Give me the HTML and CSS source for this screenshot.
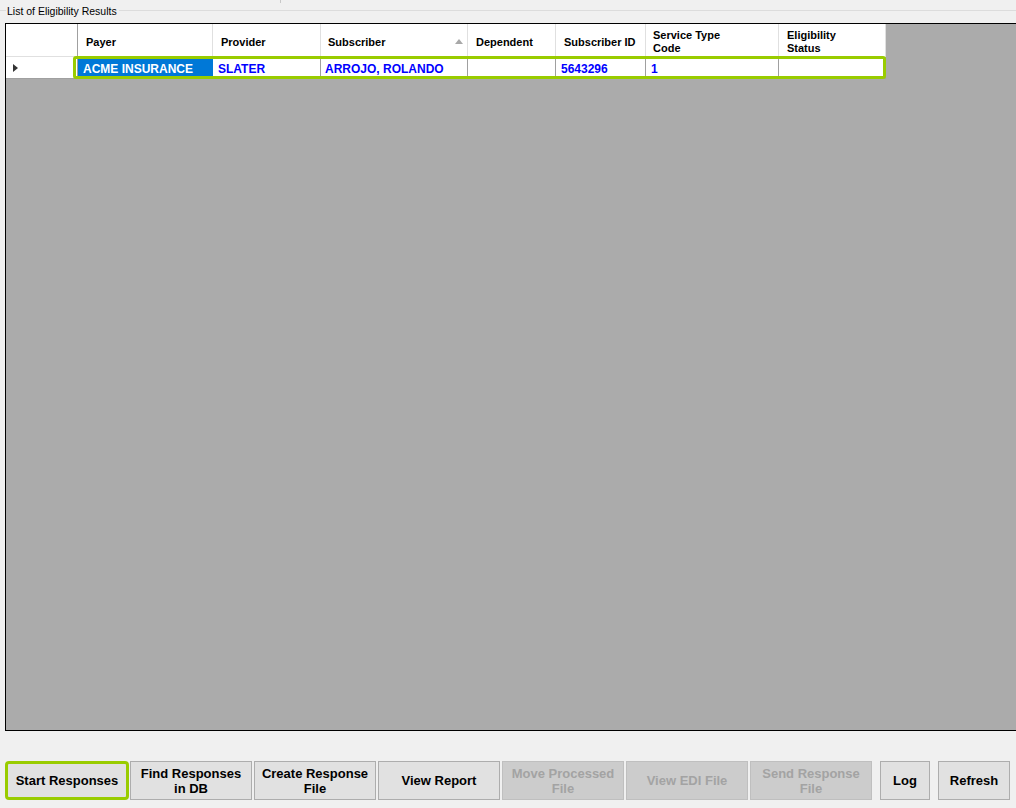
FILE: index.html
```html
<!DOCTYPE html>
<html>
<head>
<meta charset="utf-8">
<link rel="stylesheet" href="styles.css">
</head>
<body>
<div class="window">
  <div class="group-title">
    <span class="group-line short"></span>
    <span class="group-text">List of Eligibility Results</span>
    <span class="group-line long"></span>
    <span class="tick"></span>
  </div>
  <div class="grid">
    <div class="table">
      <div class="row head">
        <div class="cell rh"></div>
        <div class="cell c1">Payer</div>
        <div class="cell c2">Provider</div>
        <div class="cell c3">Subscriber<span class="sort"></span></div>
        <div class="cell c4">Dependent</div>
        <div class="cell c5">Subscriber ID</div>
        <div class="cell c6 two">Service Type<br>Code</div>
        <div class="cell c7 two">Eligibility<br>Status</div>
      </div>
      <div class="row data">
        <div class="cell rh"><span class="tri"></span></div>
        <div class="cell c1 sel">ACME INSURANCE</div>
        <div class="cell c2">SLATER</div>
        <div class="cell c3">ARROJO, ROLANDO</div>
        <div class="cell c4"></div>
        <div class="cell c5">5643296</div>
        <div class="cell c6">1</div>
        <div class="cell c7"></div>
        <div class="highlight"></div>
      </div>
    </div>
  </div>
  <div class="buttons">
    <button class="btn start">Start Responses</button>
    <button class="btn w122 g1">Find Responses<br>in DB</button>
    <button class="btn w122">Create Response<br>File</button>
    <button class="btn w122">View Report</button>
    <button class="btn w122 dis">Move Processed<br>File</button>
    <button class="btn w122 dis">View EDI File</button>
    <button class="btn w122 dis">Send Response<br>File</button>
    <button class="btn log">Log</button>
    <button class="btn refresh">Refresh</button>
  </div>
</div>
</body>
</html>
```
FILE: styles.css
```css
html, body {
  margin: 0;
  padding: 0;
  background: #f0f0f0;
  overflow: hidden;
}
.window {
  width: 1016px;
  height: 808px;
  position: relative;
  overflow: hidden;
  font-family: "Liberation Sans", Arial, sans-serif;
  display: flex;
  flex-direction: column;
}
.group-title {
  height: 23px;
  display: flex;
  align-items: flex-start;
  position: relative;
}
.group-line {
  height: 1px;
  background: #dcdcdc;
  margin-top: 10px;
}
.group-line.short { width: 6px; }
.group-line.long { flex: 1; margin-left: 2px; }
.group-text {
  font-size: 10.5px;
  color: #000;
  line-height: 12px;
  margin-top: 5px;
  padding-left: 1px;
}
.tick {
  position: absolute;
  left: 280px;
  top: 0;
  width: 1px;
  height: 3px;
  background: #c8c8c8;
}
.grid {
  margin-left: 5px;
  width: 1020px;
  height: 706px;
  border: 1px solid #000;
  background: #ababab;
}
.table {
  display: inline-block;
}
.row {
  display: flex;
  position: relative;
}
.cell {
  box-sizing: border-box;
  background: #fff;
  border-right: 1px solid #e0e0e0;
  font-weight: bold;
  position: relative;
  white-space: nowrap;
}
.head .cell {
  height: 33px;
  font-size: 11px;
  line-height: 13px;
  color: #000;
  padding: 12px 0 0 8px;
}
.head .cell.two {
  padding-top: 5px;
}
.head .cell.c3 { padding-left: 7px; }
.head .cell.c6 { padding-left: 7px; }
.rh { width: 72px; }
.c1 { width: 135px; }
.c2 { width: 108px; }
.c3 { width: 147px; }
.c4 { width: 88px; }
.c5 { width: 90px; }
.c6 { width: 133px; }
.c7 { width: 107px; }
.head .rh { border-right: 1px solid #a0a0a0; border-bottom: 1px solid #e0e0e0; }
.sort {
  position: absolute;
  right: 4px;
  top: 15px;
  width: 0;
  height: 0;
  border-left: 4px solid transparent;
  border-right: 4px solid transparent;
  border-bottom: 5px solid #a8a8a8;
}
.data .cell {
  height: 22px;
  font-size: 12px;
  line-height: 24px;
  color: #0000ff;
  padding-left: 5px;
  border-right: 1px solid #a0a0a0;
  border-bottom: 1px solid #a0a0a0;
}
.data .cell.c3 { padding-left: 4px; }
.data .cell.c6 { padding-left: 5px; }
.data .cell.sel {
  background: #0078d7;
  color: #fff;
  border-right-color: #0078d7;
}
.tri {
  position: absolute;
  left: 7px;
  top: 7px;
  width: 0;
  height: 0;
  border-top: 4.5px solid transparent;
  border-bottom: 4.5px solid transparent;
  border-left: 5px solid #333;
}
.highlight {
  position: absolute;
  left: 67px;
  top: -1px;
  width: 813px;
  height: 23px;
  border: 3px solid #99cc00;
  border-radius: 3px;
  box-sizing: border-box;
  pointer-events: none;
}
.buttons {
  display: flex;
  margin-top: 30px;
  padding-left: 5px;
  gap: 2px;
}
.btn {
  box-sizing: border-box;
  height: 39px;
  background: #e1e1e1;
  border: 1px solid #adadad;
  font-family: "Liberation Sans", Arial, sans-serif;
  font-weight: bold;
  font-size: 13px;
  line-height: 15px;
  color: #000;
  padding: 0;
  text-align: center;
}
.btn.start {
  width: 124px;
  border: 3px solid #99cc00;
  border-radius: 4px;
  margin-right: -1px;
}
.w122 { width: 122px; }
.btn.dis {
  background: #cccccc;
  border-color: #bfbfbf;
  color: #a3a3a3;
}
.btn.log {
  width: 50px;
  margin-left: 6px;
}
.btn.refresh {
  width: 72px;
  margin-left: 6px;
}
```
